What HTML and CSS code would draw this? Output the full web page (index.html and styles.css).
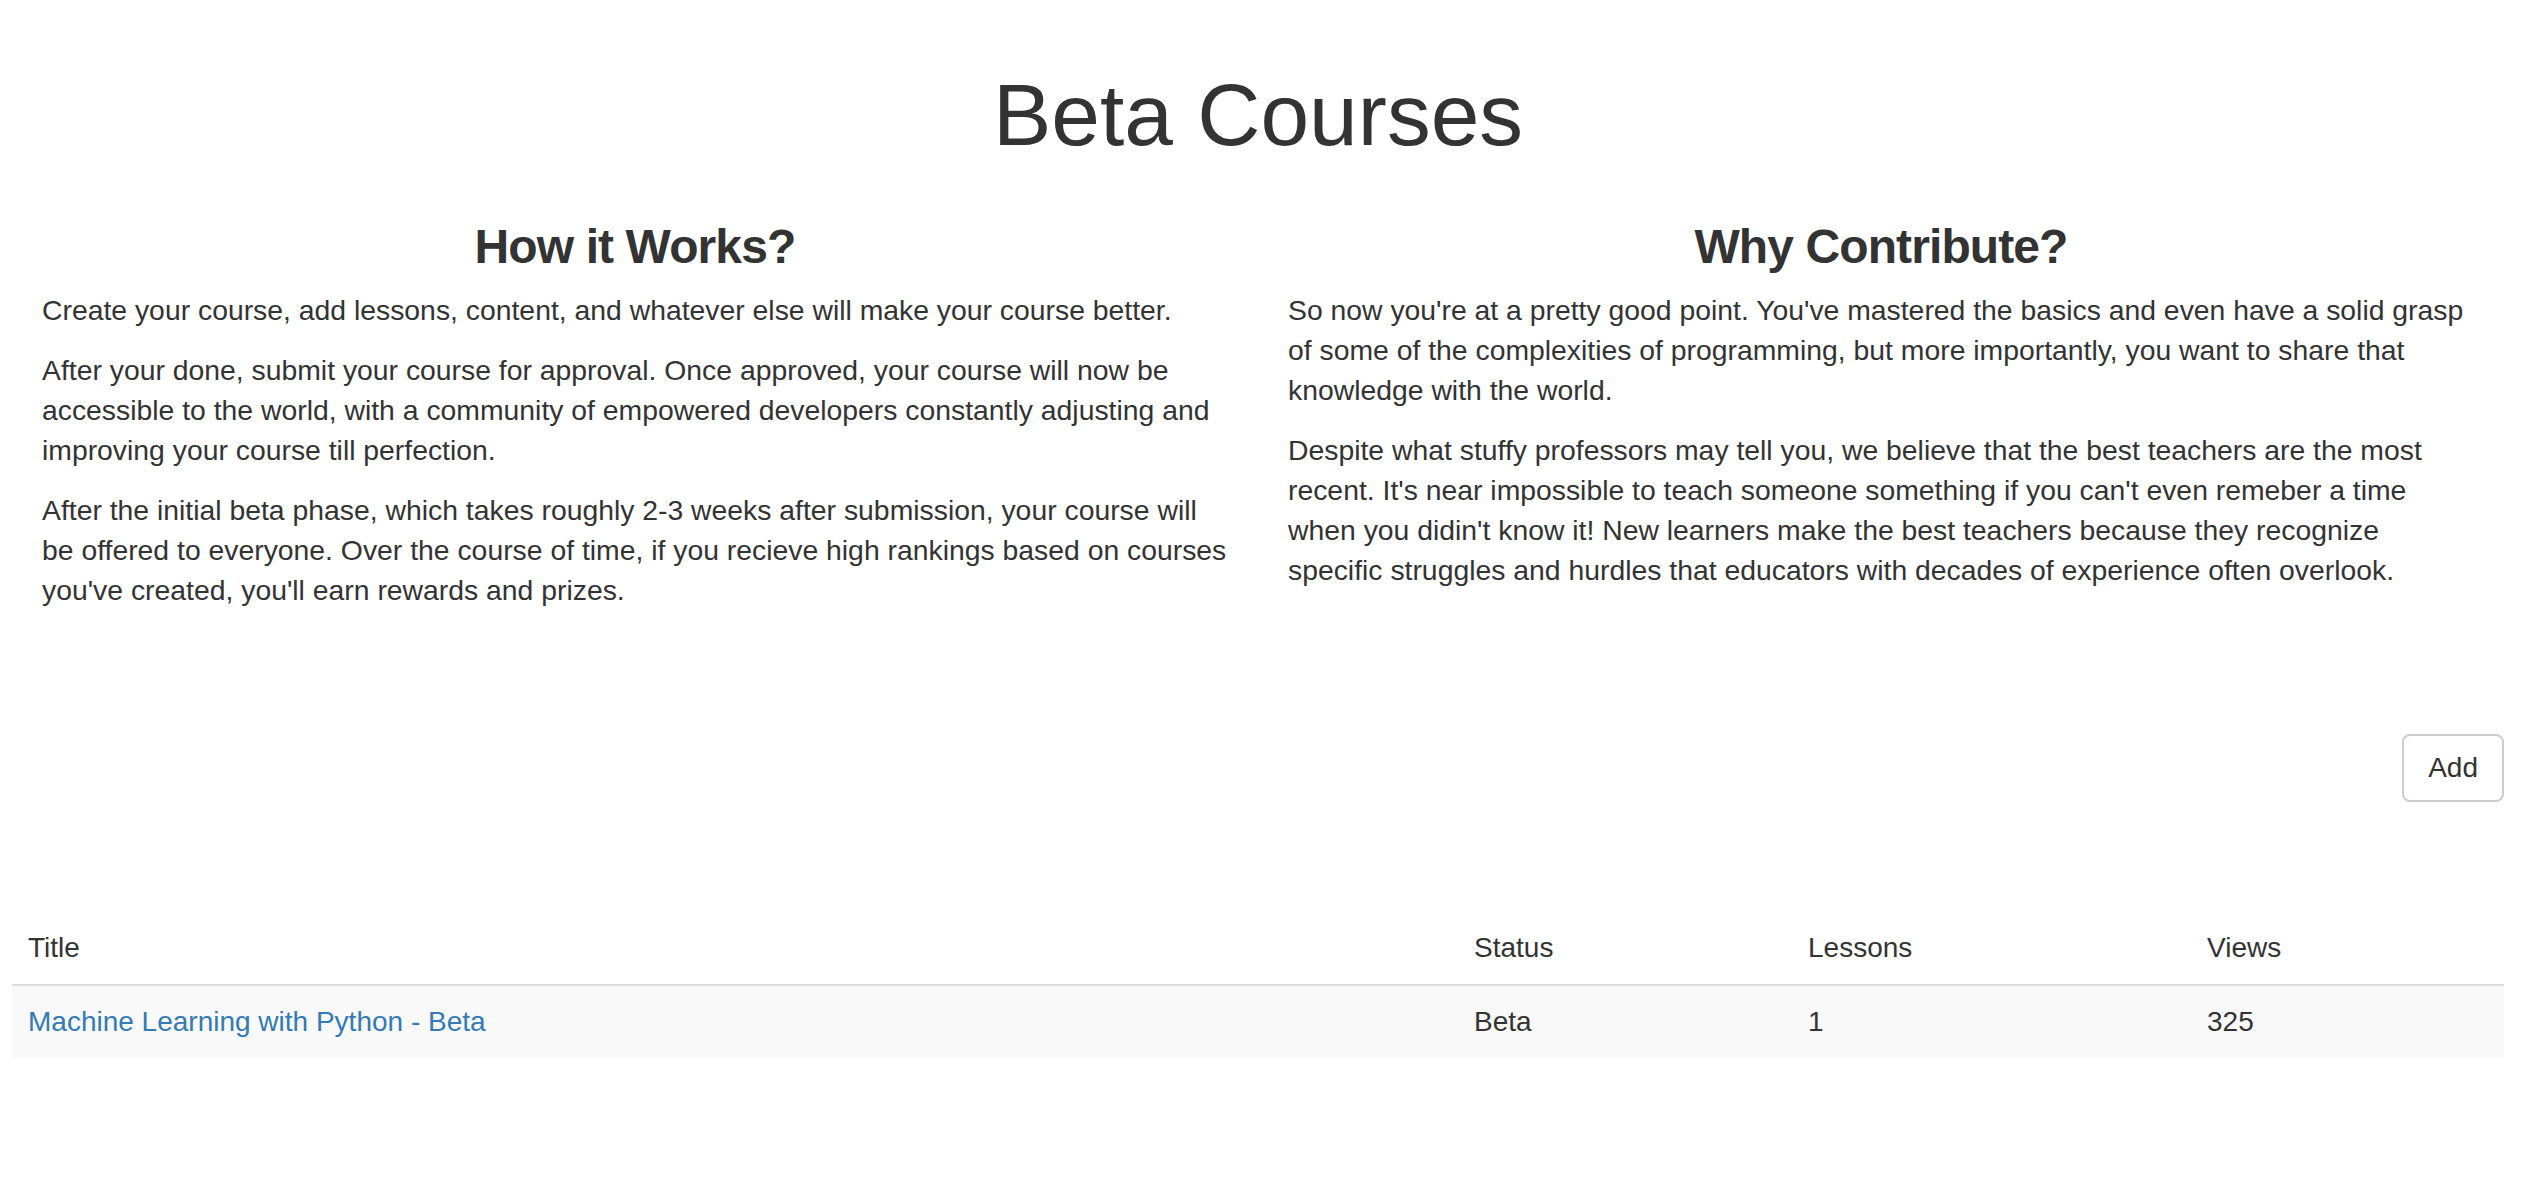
FILE: index.html
```html
<!DOCTYPE html>
<html lang="en">
<head>
<meta charset="utf-8">
<title>Beta Courses</title>
<link rel="stylesheet" href="styles.css">
</head>
<body>
<div class="page">
  <h1 class="page-title">Beta Courses</h1>
  <div class="info-row">
    <section class="info-col info-col-left">
      <h3 class="info-heading">How it Works?</h3>
      <p>Create your course, add lessons, content, and whatever else will make your course better.</p>
      <p>After your done, submit your course for approval. Once approved, your course will now be accessible to the world, with a community of empowered developers constantly adjusting and improving your course till perfection.</p>
      <p>After the initial beta phase, which takes roughly 2-3 weeks after submission, your course will be offered to everyone. Over the course of time, if you recieve high rankings based on courses you've created, you'll earn rewards and prizes.</p>
    </section>
    <section class="info-col">
      <h3 class="info-heading">Why Contribute?</h3>
      <p>So now you're at a pretty good point. You've mastered the basics and even have a solid grasp of some of the complexities of programming, but more importantly, you want to share that knowledge with the world.</p>
      <p>Despite what stuffy professors may tell you, we believe that the best teachers are the most recent. It's near impossible to teach someone something if you can't even remeber a time when you didin't know it! New learners make the best teachers because they recognize specific struggles and hurdles that educators with decades of experience often overlook.</p>
    </section>
  </div>
  <div class="actions">
    <button class="btn" type="button">Add</button>
  </div>
  <table class="course-table">
    <colgroup>
      <col class="c-title">
      <col class="c-status">
      <col class="c-lessons">
      <col class="c-views">
    </colgroup>
    <thead>
      <tr><th>Title</th><th>Status</th><th>Lessons</th><th>Views</th></tr>
    </thead>
    <tbody>
      <tr>
        <td><a href="#">Machine Learning with Python - Beta</a></td>
        <td>Beta</td>
        <td>1</td>
        <td>325</td>
      </tr>
    </tbody>
  </table>
</div>
</body>
</html>
```

FILE: styles.css
```css
* { box-sizing: border-box; }
html, body { margin: 0; padding: 0; background: #fff; }
body {
  font-family: "Liberation Sans", Arial, Helvetica, sans-serif;
  font-size: 28px;
  line-height: 40px;
  color: #333;
}
.page {
  padding: 0 18px 0 12px;
}
.page-title {
  margin: 60px 0 0;
  font-size: 87.5px;
  font-weight: normal;
  line-height: 110px;
  text-align: center;
}
.info-row {
  display: flex;
  margin-top: 47px;
}
.info-col {
  flex: 0 0 50%;
  padding: 0 30px;
}
.info-col-left {
  padding-right: 26px;
}
.info-heading {
  margin: 0 0 13px;
  font-size: 48px;
  font-weight: bold;
  line-height: 60px;
  text-align: center;
  letter-spacing: -0.9px;
}
.info-col-left .info-heading {
  margin-right: 4px;
}
.info-col p {
  margin: 0 0 20px;
  font-size: 28.35px;
}
.actions {
  display: flex;
  justify-content: flex-end;
  margin-top: 104px;
}
.btn {
  font-family: inherit;
  font-size: 28px;
  line-height: 40px;
  color: #333;
  background: #fff;
  border: 2px solid #ccc;
  border-radius: 8px;
  padding: 12px 24px;
}
.course-table {
  width: 100%;
  border-collapse: collapse;
  margin-top: 110px;
}
.c-title { width: 1446px; }
.c-status { width: 334px; }
.c-lessons { width: 399px; }
.c-views { width: 313px; }
.course-table th,
.course-table td {
  text-align: left;
  font-weight: normal;
  padding: 16px 16px;
  vertical-align: top;
}
.course-table thead th {
  border-bottom: 2px solid #ddd;
}
.course-table tbody tr {
  background: #f9f9f9;
}
.course-table a {
  color: #337ab7;
  text-decoration: none;
}
```
